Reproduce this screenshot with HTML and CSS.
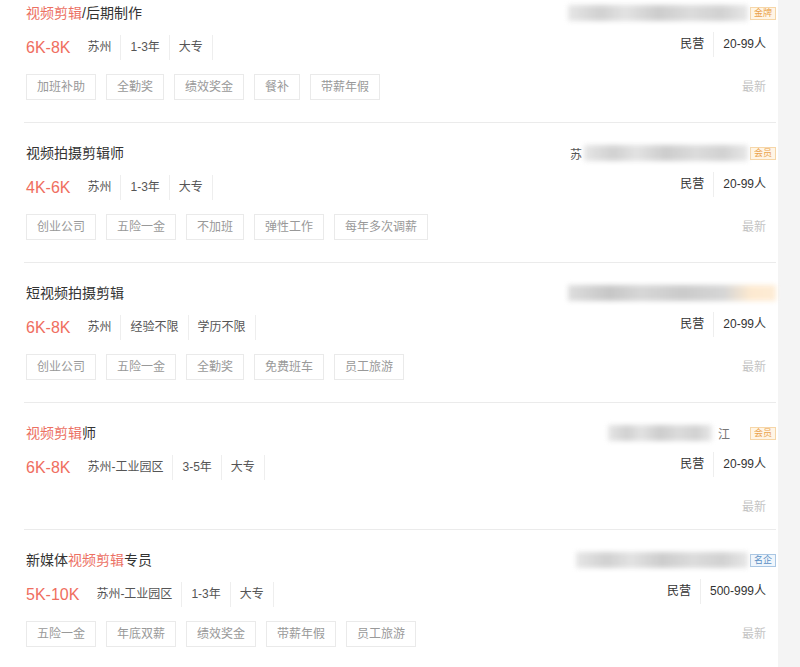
FILE: index.html
```html
<!DOCTYPE html>
<html lang="zh-CN">
<head>
    <meta charset="UTF-8">
    <meta name="viewport" content="width=device-width, initial-scale=1.0">
    <title>职位列表</title>
    <link rel="stylesheet" href="styles.css">
</head>
<body>
    <div class="page">
        <ul class="job-list">
            <li class="job">
                <div class="job-top">
                    <div class="job-title"><em>视频剪辑</em>/后期制作</div>
                    <div class="company">
                        <span class="co-blur co-blur-a"></span>
                        <span class="badge">金牌</span>
                    </div>
                </div>
                <div class="job-mid">
                    <div class="job-info">
                        <span class="salary">6K-8K</span>
                        <span class="meta">苏州</span>
                        <span class="meta">1-3年</span>
                        <span class="meta">大专</span>
                    </div>
                    <div class="co-info">
                        <span class="meta">民营</span>
                        <span class="meta">20-99人</span>
                    </div>
                </div>
                <div class="job-bottom">
                    <div class="tags">
                        <span class="tag">加班补助</span>
                        <span class="tag">全勤奖</span>
                        <span class="tag">绩效奖金</span>
                        <span class="tag">餐补</span>
                        <span class="tag">带薪年假</span>
                    </div>
                    <span class="fresh">最新</span>
                </div>
            </li>
            <li class="job">
                <div class="job-top">
                    <div class="job-title">视频拍摄剪辑师</div>
                    <div class="company">
                        <span class="co-char">苏</span>
                        <span class="co-blur co-blur-b"></span>
                        <span class="badge">会员</span>
                    </div>
                </div>
                <div class="job-mid">
                    <div class="job-info">
                        <span class="salary">4K-6K</span>
                        <span class="meta">苏州</span>
                        <span class="meta">1-3年</span>
                        <span class="meta">大专</span>
                    </div>
                    <div class="co-info">
                        <span class="meta">民营</span>
                        <span class="meta">20-99人</span>
                    </div>
                </div>
                <div class="job-bottom">
                    <div class="tags">
                        <span class="tag">创业公司</span>
                        <span class="tag">五险一金</span>
                        <span class="tag">不加班</span>
                        <span class="tag">弹性工作</span>
                        <span class="tag">每年多次调薪</span>
                    </div>
                    <span class="fresh">最新</span>
                </div>
            </li>
            <li class="job">
                <div class="job-top">
                    <div class="job-title">短视频拍摄剪辑</div>
                    <div class="company">
                        <span class="co-blur co-blur-c"></span>
                    </div>
                </div>
                <div class="job-mid">
                    <div class="job-info">
                        <span class="salary">6K-8K</span>
                        <span class="meta">苏州</span>
                        <span class="meta">经验不限</span>
                        <span class="meta">学历不限</span>
                    </div>
                    <div class="co-info">
                        <span class="meta">民营</span>
                        <span class="meta">20-99人</span>
                    </div>
                </div>
                <div class="job-bottom">
                    <div class="tags">
                        <span class="tag">创业公司</span>
                        <span class="tag">五险一金</span>
                        <span class="tag">全勤奖</span>
                        <span class="tag">免费班车</span>
                        <span class="tag">员工旅游</span>
                    </div>
                    <span class="fresh">最新</span>
                </div>
            </li>
            <li class="job">
                <div class="job-top">
                    <div class="job-title"><em>视频剪辑</em>师</div>
                    <div class="company">
                        <span class="co-blur co-blur-d"></span>
                        <span class="co-tail">江</span>
                        <span class="badge">会员</span>
                    </div>
                </div>
                <div class="job-mid">
                    <div class="job-info">
                        <span class="salary">6K-8K</span>
                        <span class="meta">苏州-工业园区</span>
                        <span class="meta">3-5年</span>
                        <span class="meta">大专</span>
                    </div>
                    <div class="co-info">
                        <span class="meta">民营</span>
                        <span class="meta">20-99人</span>
                    </div>
                </div>
                <div class="job-bottom">
                    <div class="tags"></div>
                    <span class="fresh">最新</span>
                </div>
            </li>
            <li class="job">
                <div class="job-top">
                    <div class="job-title">新媒体<em>视频剪辑</em>专员</div>
                    <div class="company">
                        <span class="co-blur co-blur-e"></span>
                        <span class="badge badge-blue">名企</span>
                    </div>
                </div>
                <div class="job-mid">
                    <div class="job-info">
                        <span class="salary">5K-10K</span>
                        <span class="meta">苏州-工业园区</span>
                        <span class="meta">1-3年</span>
                        <span class="meta">大专</span>
                    </div>
                    <div class="co-info">
                        <span class="meta">民营</span>
                        <span class="meta">500-999人</span>
                    </div>
                </div>
                <div class="job-bottom">
                    <div class="tags">
                        <span class="tag">五险一金</span>
                        <span class="tag">年底双薪</span>
                        <span class="tag">绩效奖金</span>
                        <span class="tag">带薪年假</span>
                        <span class="tag">员工旅游</span>
                    </div>
                    <span class="fresh">最新</span>
                </div>
            </li>
        </ul>
    </div>
</body>
</html>
```

FILE: styles.css
```css
body {
    margin: 0;
    background: #f4f4f4;
    font-family: 'Liberation Sans', 'Noto Sans CJK SC', sans-serif;
    color: #333;
    height: 667px;
    overflow: hidden;
}
.page {
    width: 778px;
    height: 100%;
    background: #fff;
    box-sizing: border-box;
    padding-left: 24px;
    padding-right: 2px;
}
.job-list {
    list-style: none;
    margin: 0;
    padding: 0;
}
.job {
    padding: 21px 0 9px 2px;
    border-bottom: 1px solid #ebebeb;
}
.job:first-child {
    padding-top: 4px;
}
.job-top {
    display: flex;
    justify-content: space-between;
    align-items: center;
    height: 18px;
}
.job-title {
    font-size: 14px;
    line-height: 18px;
    color: #333;
}
.job-title em {
    font-style: normal;
    color: #ec7063;
}
.company {
    display: flex;
    align-items: center;
    height: 18px;
}
.co-blur {
    display: block;
    height: 16px;
    background: linear-gradient(to right, #e2e2e2, #c9c9c9 18%, #dedede 32%, #c4c4c4 50%, #d6d6d6 68%, #cacaca 85%, #e4e4e4);
    filter: blur(2.5px);
    opacity: 0.85;
}
.co-blur-a { width: 180px; margin-right: 2px; }
.co-blur-b { width: 164px; margin-right: 2px; }
.co-blur-c {
    width: 208px;
    background: linear-gradient(to right, #d8d8d8, #bdbdbd 20%, #d0d0d0 35%, #c2c2c2 55%, #cfcfcf 75%, #fde6c8 88%, #fde9cf);
}
.co-blur-d { width: 104px; margin-right: 6px; }
.co-blur-e { width: 172px; margin-right: 2px; }
.co-char, .co-tail {
    font-size: 12px;
    color: #555;
    margin-right: 2px;
}
.co-tail {
    width: 30px;
    overflow: hidden;
    color: #777;
}
.badge {
    font-size: 9px;
    line-height: 11px;
    padding: 0 3px;
    color: #eaa24a;
    background: #fff5e6;
    border: 1px solid #f6d6a8;
}
.badge-blue {
    color: #5b8fc4;
    background: #f0f6fc;
    border-color: #a9c6e3;
}
.job-mid {
    display: flex;
    justify-content: space-between;
    align-items: center;
    margin-top: 13px;
    padding-right: 10px;
}
.job-info, .co-info {
    display: flex;
    align-items: center;
    height: 25px;
}
.salary {
    font-size: 16px;
    color: #ef6e60;
    margin-right: 8px;
}
.meta {
    font-size: 12px;
    color: #555;
    padding: 0 9px;
    line-height: 25px;
    border-right: 1px solid #eee;
}
.co-info {
    margin-top: -6px;
}
.co-info .meta {
    color: #333;
}
.co-info .meta:last-child {
    border-right: none;
    padding-right: 0;
}
.job-bottom {
    display: flex;
    justify-content: space-between;
    align-items: flex-start;
    margin-top: 14px;
    padding-right: 10px;
}
.tags {
    display: flex;
    gap: 10px;
}
.tag {
    font-size: 12px;
    color: #999;
    height: 26px;
    line-height: 24px;
    box-sizing: border-box;
    padding: 0 10px;
    border: 1px solid #eaeaea;
    margin-bottom: 13px;
}
.fresh {
    font-size: 12px;
    color: #c4c4c4;
    line-height: 26px;
}
```
